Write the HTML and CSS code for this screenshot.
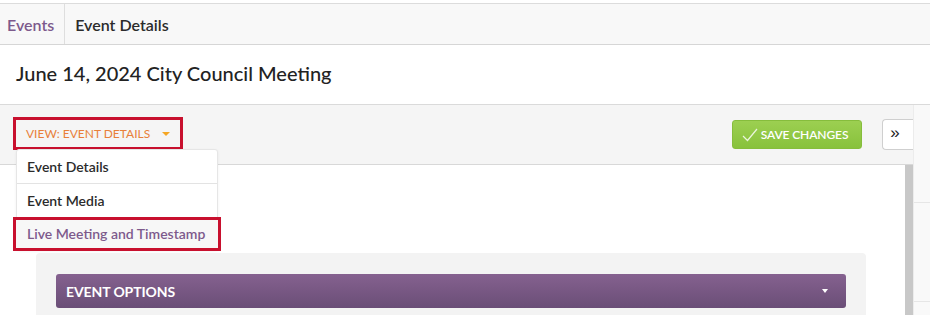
FILE: index.html
```html
<!DOCTYPE html>
<html lang="en">
<head>
    <meta charset="UTF-8">
    <meta name="viewport" content="width=device-width, initial-scale=1.0">
    <title>Event Details</title>
    <link rel="stylesheet" href="styles.css">
</head>
<body>
    <div class="breadcrumb">
        <a href="#" class="crumb crumb-link">Events</a>
        <span class="crumb crumb-current">Event Details</span>
    </div>

    <div class="page-header">
        <h1>June 14, 2024 City Council Meeting</h1>
    </div>

    <div class="main">
        <div class="workspace">
            <div class="toolbar">
                <div class="view-select">
                    <button class="view-toggle highlight">VIEW: EVENT DETAILS <span class="caret"></span></button>
                    <ul class="view-menu">
                        <li><a href="#">Event Details</a></li>
                        <li><a href="#">Event Media</a></li>
                        <li class="active highlight"><a href="#">Live Meeting and Timestamp</a></li>
                    </ul>
                </div>
                <div class="toolbar-actions">
                    <button class="btn-save">
                        <svg width="16" height="14" viewBox="0 0 16 14"><path d="M1 8 L5.5 12.5 L15 1" fill="none" stroke="#eaf5dc" stroke-width="1.2"/></svg>
                        SAVE CHANGES
                    </button>
                    <button class="btn-expand">&raquo;</button>
                </div>
            </div>
            <div class="content">
                <div class="content-inner">
                    <div class="panel">
                        <div class="panel-bar">
                            <span>EVENT OPTIONS</span>
                            <span class="caret caret-white"></span>
                        </div>
                    </div>
                </div>
                <div class="scrollbar"></div>
            </div>
        </div>
        <div class="side">
            <div class="side-row"></div>
            <div class="side-row side-row-last"></div>
        </div>
    </div>
</body>
</html>
```

FILE: styles.css
```css
body,
html {
    margin: 0;
    padding: 0;
    font-family: Lato, "Open Sans", sans-serif;
    background-color: white;
    color: #2b2b2b;
    overflow: hidden;
}

.breadcrumb {
    margin-top: 3px;
    height: 40px;
    display: flex;
    align-items: stretch;
    background-color: #f8f8f8;
    border-top: 1px solid #dcdcdc;
    border-bottom: 1px solid #d6d6d6;
}

.crumb {
    display: flex;
    align-items: center;
    font-size: 16px;
    font-weight: 600;
    text-decoration: none;
}

.crumb-link {
    color: #7d5a8c;
    padding: 0 10px 0 7px;
    border-right: 1px solid #dedede;
}

.crumb-current {
    padding: 0 10px;
    color: #2b2b2b;
}

.page-header {
    height: 59px;
    display: flex;
    align-items: center;
    padding-left: 16px;
    border-bottom: 1px solid #dadada;
    box-shadow: 0 1px 2px rgba(0, 0, 0, 0.05);
}

.page-header h1 {
    margin: 0;
    font-size: 20px;
    font-weight: 500;
    color: #222;
    padding-bottom: 4px;
}

.main {
    display: flex;
    height: 210px;
}

.workspace {
    width: 913px;
    display: flex;
    flex-direction: column;
    border-right: 1px solid #ececec;
}

.toolbar {
    height: 59px;
    flex: none;
    display: flex;
    justify-content: space-between;
    align-items: flex-start;
    background-color: #f5f5f5;
    border-bottom: 1px solid #d8d8d8;
    position: relative;
    z-index: 2;
}

.highlight {
    outline: 3px solid #c8102e;
    outline-offset: -3px;
}

.view-select {
    position: relative;
    margin: 12px 0 0 13px;
}

.view-toggle {
    height: 33px;
    width: 170px;
    padding: 0 0 0 13px;
    border: 0;
    background: transparent;
    color: #e8803a;
    font-family: inherit;
    font-size: 12px;
    text-align: left;
    display: flex;
    align-items: center;
    gap: 12px;
}

.caret {
    display: inline-block;
    width: 0;
    height: 0;
    border-left: 4px solid transparent;
    border-right: 4px solid transparent;
    border-top: 4px solid #f5a623;
}

.caret-white {
    border-top-color: white;
    border-left-width: 3.5px;
    border-right-width: 3.5px;
}

.view-menu {
    position: absolute;
    top: 32px;
    left: 3px;
    width: 200px;
    margin: 0;
    padding: 0;
    list-style: none;
    background: white;
    border: 1px solid #e6e6e6;
    border-radius: 3px;
    box-shadow: 0 1px 3px rgba(0, 0, 0, 0.06);
}

.view-menu li a {
    display: flex;
    align-items: center;
    height: 33px;
    padding-left: 10px;
    font-size: 14px;
    font-weight: 600;
    color: #2b2b2b;
    text-decoration: none;
}

.view-menu li + li {
    border-top: 1px solid #e3e3e3;
}

.view-menu li.active {
    margin: 0 -4px -2px -4px;
    padding: 0 4px 2px 4px;
    background: #f7f7f7;
}

.view-menu li.active a {
    color: #7d5a8c;
    height: 31px;
}

.toolbar-actions {
    display: flex;
    align-items: center;
    gap: 20px;
    margin-top: 14px;
}

.btn-save {
    width: 130px;
    height: 29px;
    border: 1px solid #86bd3c;
    border-radius: 3px;
    background: linear-gradient(#9ccf51, #88c23c);
    color: white;
    font-family: inherit;
    font-size: 12px;
    font-weight: 600;
    letter-spacing: -0.1px;
    display: flex;
    align-items: center;
    justify-content: center;
    gap: 3px;
    padding: 0 4px 0 0;
}

.btn-expand {
    width: 31px;
    height: 31px;
    border: 1px solid #cfcfcf;
    border-right: 0;
    border-radius: 4px 0 0 4px;
    background: white;
    font-size: 17px;
    color: #222;
    padding: 0 6px 3px 0;
}

.content {
    flex: 1;
    display: flex;
    background: white;
    overflow: hidden;
}

.content-inner {
    flex: 1;
    padding: 88px 39px 0 36px;
}

.panel {
    box-sizing: border-box;
    height: 100%;
    background: #f3f3f3;
    border-radius: 4px 4px 0 0;
    padding: 21px 20px 0 20px;
}

.panel-bar {
    height: 34px;
    display: flex;
    align-items: center;
    justify-content: space-between;
    padding: 0 18px 0 10px;
    border-radius: 3px;
    background: linear-gradient(#85618f, #6a4e77);
    color: white;
    font-size: 14px;
    font-weight: 700;
    letter-spacing: -0.1px;
}

.scrollbar {
    width: 8px;
    background: #c8c8c8;
}

.side {
    flex: 1;
    display: flex;
    flex-direction: column;
    background: #f9f9f9;
    padding-top: 97px;
    overflow: hidden;
}

.side-row {
    height: 98px;
    flex: none;
    border-top: 1px solid #e6e6e6;
}

.side-row-last {
    height: auto;
    flex: 1;
}
```
